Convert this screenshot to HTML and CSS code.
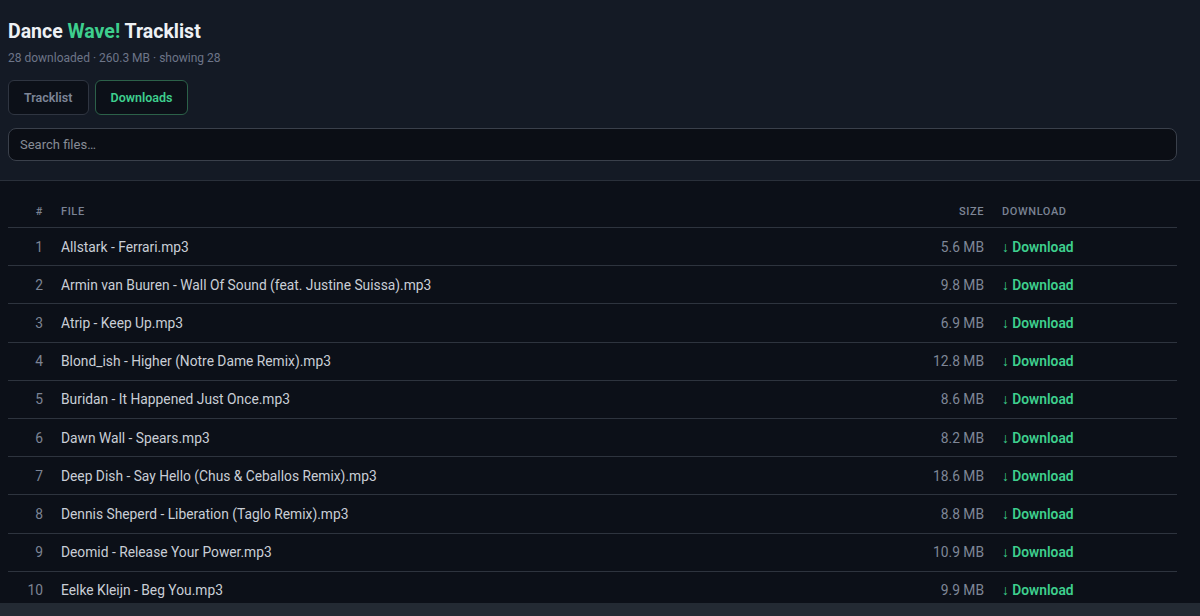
FILE: index.html
```html
<!DOCTYPE html>
<html lang="en">
<head>
  <meta charset="UTF-8" />
  <meta name="viewport" content="width=device-width,initial-scale=1" />
  <title>Dance Wave! Tracklist</title>
  <link rel="stylesheet" href="styles.css">
</head>
<body>
  <header class="top">
    <h1>Dance <span class="accent">Wave!</span> Tracklist</h1>
    <p class="stats">28 downloaded · 260.3 MB · showing 28</p>
    <div class="tabs">
      <button class="tab">Tracklist</button>
      <button class="tab active">Downloads</button>
    </div>
    <input class="search" type="text" placeholder="Search files…" />
  </header>

  <main class="files">
    <table>
      <thead>
        <tr>
          <th class="num">#</th>
          <th>File</th>
          <th class="size">Size</th>
          <th class="dl">Download</th>
        </tr>
      </thead>
      <tbody id="fileRows"></tbody>
    </table>
  </main>

  <div class="bottom-bar"></div>

  <script>
    const files = [
      { name: "Allstark - Ferrari.mp3", size: "5.6 MB" },
      { name: "Armin van Buuren - Wall Of Sound (feat. Justine Suissa).mp3", size: "9.8 MB" },
      { name: "Atrip - Keep Up.mp3", size: "6.9 MB" },
      { name: "Blond_ish - Higher (Notre Dame Remix).mp3", size: "12.8 MB" },
      { name: "Buridan - It Happened Just Once.mp3", size: "8.6 MB" },
      { name: "Dawn Wall - Spears.mp3", size: "8.2 MB" },
      { name: "Deep Dish - Say Hello (Chus & Ceballos Remix).mp3", size: "18.6 MB" },
      { name: "Dennis Sheperd - Liberation (Taglo Remix).mp3", size: "8.8 MB" },
      { name: "Deomid - Release Your Power.mp3", size: "10.9 MB" },
      { name: "Eelke Kleijn - Beg You.mp3", size: "9.9 MB" },
    ];

    const rows = document.getElementById("fileRows");

    files.forEach((file, i) => {
      const tr = document.createElement("tr");
      tr.innerHTML = `
        <td class="num">${i + 1}</td>
        <td class="name"></td>
        <td class="size">${file.size}</td>
        <td class="dl"><a href="#">↓ Download</a></td>
      `;
      tr.querySelector(".name").textContent = file.name;
      rows.appendChild(tr);
    });
  </script>
</body>
</html>
```

FILE: styles.css
```css
body {
  margin: 0;
  font-family: Roboto, "Noto Sans", sans-serif;
  background: #0c1018;
  color: #c9ced6;
}

.top {
  background: #141a25;
  padding: 20px 23px 19px 8px;
  border-bottom: 1px solid #2a303a;
}
.top h1 {
  margin: 0;
  font-size: 19.5px;
  line-height: 24px;
  font-weight: 700;
  color: #eef1f5;
}
.accent {
  color: #3ecf8e;
}
.stats {
  margin: 6px 0 0;
  font-size: 12px;
  line-height: 16px;
  color: #6d7588;
}

.tabs {
  display: flex;
  gap: 6px;
  margin-top: 14px;
}
.tab {
  font-family: inherit;
  font-size: 12.5px;
  font-weight: 600;
  line-height: 15px;
  padding: 9px 15px;
  border-radius: 6px;
  border: 1px solid #2f3541;
  background: #0c1018;
  color: #7d8597;
  cursor: pointer;
}
.tab.active {
  border-color: #2c6149;
  color: #3ecf8e;
}

.search {
  display: block;
  box-sizing: border-box;
  width: 100%;
  height: 33px;
  margin-top: 13px;
  padding: 0 11px;
  font-family: inherit;
  font-size: 13px;
  color: #c9ced6;
  background: #0b0e15;
  border: 1px solid #3a404b;
  border-radius: 8px;
  outline: none;
}
.search::placeholder {
  color: #878c96;
}

.files {
  padding: 14px 23px 0 8px;
}
table {
  width: 100%;
  border-collapse: collapse;
  table-layout: fixed;
}
th {
  padding: 11px 9px 9px;
  font-size: 11px;
  line-height: 12px;
  font-weight: 500;
  letter-spacing: 0.6px;
  text-transform: uppercase;
  text-align: left;
  color: #7a8394;
  border-bottom: 1px solid #2e343e;
}
td {
  padding: 10.6px 9px;
  font-size: 13.8px;
  line-height: 16px;
  border-bottom: 1px solid #2e343e;
  white-space: nowrap;
  overflow: hidden;
}
.num {
  width: 26px;
  text-align: right;
  color: #7c8494;
}
.size {
  width: 92px;
  text-align: right;
  color: #7f8797;
}
.dl {
  width: 166px;
}
td.dl a {
  color: #3ecf8e;
  font-weight: 600;
  text-decoration: none;
}

.bottom-bar {
  position: fixed;
  left: 0;
  right: 0;
  bottom: 0;
  height: 13px;
  background: #232a33;
}
```
